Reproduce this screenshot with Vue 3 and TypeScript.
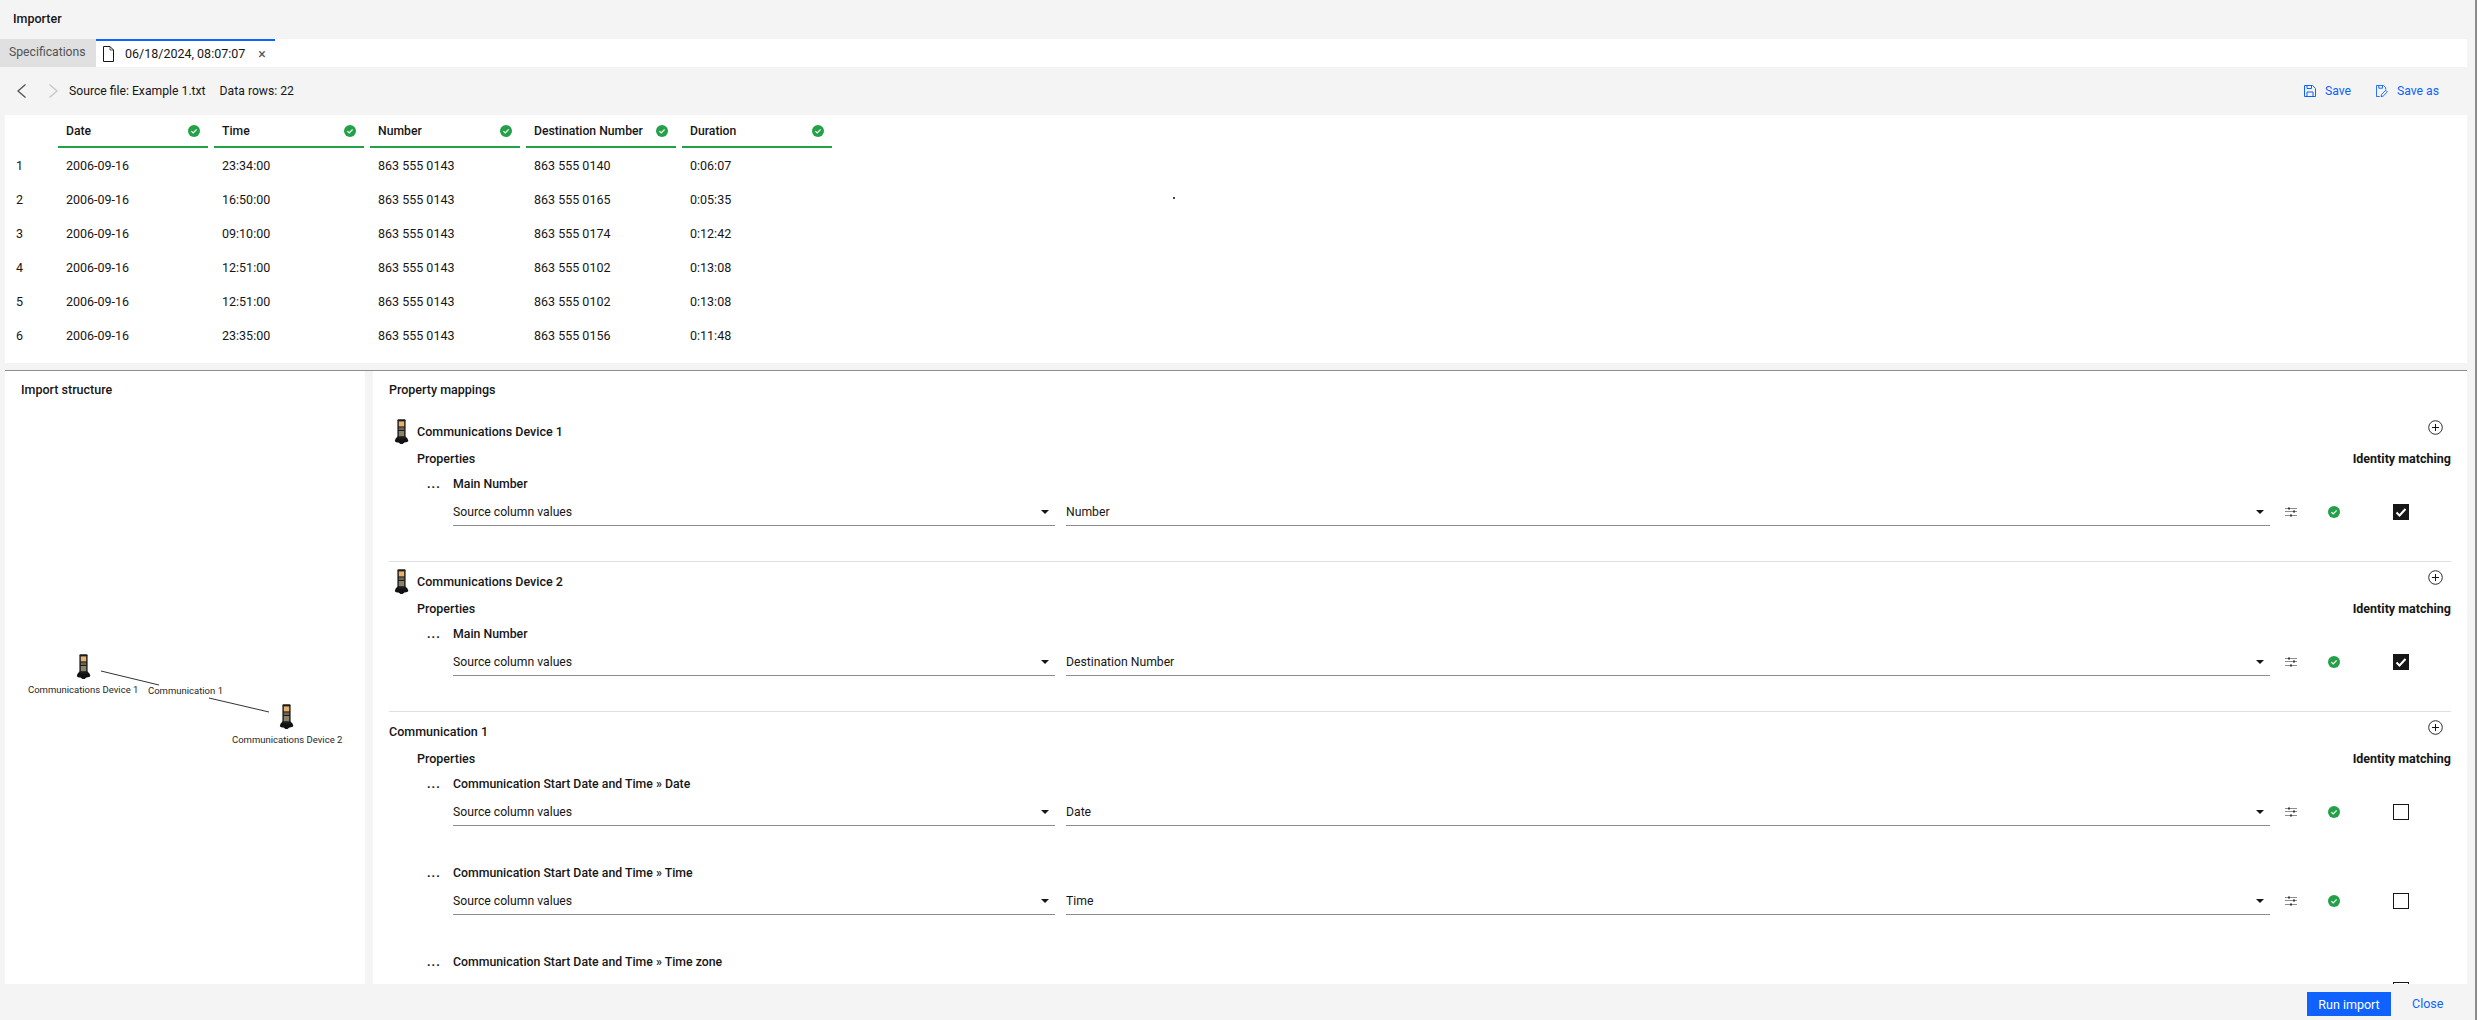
<script setup lang="ts">
const columns = ['Date', 'Time', 'Number', 'Destination Number', 'Duration']
const rows = [
  ['1', '2006-09-16', '23:34:00', '863 555 0143', '863 555 0140', '0:06:07'],
  ['2', '2006-09-16', '16:50:00', '863 555 0143', '863 555 0165', '0:05:35'],
  ['3', '2006-09-16', '09:10:00', '863 555 0143', '863 555 0174', '0:12:42'],
  ['4', '2006-09-16', '12:51:00', '863 555 0143', '863 555 0102', '0:13:08'],
  ['5', '2006-09-16', '12:51:00', '863 555 0143', '863 555 0102', '0:13:08'],
  ['6', '2006-09-16', '23:35:00', '863 555 0143', '863 555 0156', '0:11:48']
]
const sections = [
  { title: 'Communications Device 1', device: true, attrs: [{ name: 'Main Number', col: 'Number', on: true }] },
  { title: 'Communications Device 2', device: true, attrs: [{ name: 'Main Number', col: 'Destination Number', on: true }] },
  {
    title: 'Communication 1', device: false, attrs: [
      { name: 'Communication Start Date and Time » Date', col: 'Date', on: false },
      { name: 'Communication Start Date and Time » Time', col: 'Time', on: false },
      { name: 'Communication Start Date and Time » Time zone', col: '', on: false }
    ]
  }
]
</script>

<template>
  <div class="app">
    <svg width="0" height="0" class="defs">
      <defs>
        <symbol id="phone" viewBox="0 0 15 25">
          <path d="M0.8 22 Q1.2 19 3.5 17.5 L11.5 17.5 Q14 19 14.4 22 Q14 23.4 10.5 23.6 L8.5 25 L6.5 25 L4.5 23.6 Q1 23.4 0.8 22Z" fill="#111" />
          <rect x="3.4" y="0.3" width="8.2" height="19.5" rx="1" fill="#1c1c1c" />
          <rect x="4.8" y="2.4" width="5.4" height="5" fill="#e8b26c" />
          <rect x="4.8" y="8.4" width="5.4" height="2.6" fill="#6e6650" />
          <rect x="4.8" y="12" width="5.4" height="5.2" fill="#8b8268" />
        </symbol>
        <symbol id="ok" viewBox="0 0 12 12">
          <circle cx="6" cy="6" r="6" fill="#24a148" />
          <path d="M3.4 6.2 5.2 8 8.6 4.5" fill="none" stroke="#fff" stroke-width="1.1" />
        </symbol>
      </defs>
    </svg>

    <header class="title">Importer</header>

    <nav class="tabs">
      <div class="tab">Specifications</div>
      <div class="tab active">
        <svg class="file" viewBox="0 0 11 16" width="11" height="16">
          <path d="M0.5 0.5h6.5l3.5 3.5v11.5h-10z" fill="#fff" stroke="#161616" stroke-width="1" />
          <path d="M7 0.5v3.5h3.5" fill="none" stroke="#161616" stroke-width="0.7" />
        </svg>
        <span class="tab-name">06/18/2024, 08:07:07</span>
        <span class="tab-x">×</span>
      </div>
    </nav>

    <div class="toolbar">
      <svg class="chev" viewBox="0 0 9 14" width="9" height="14">
        <path d="M8.5 0.5 1 7l7.5 6.5" fill="none" stroke="#525252" stroke-width="1.3" />
      </svg>
      <svg class="chev second" viewBox="0 0 9 14" width="9" height="14">
        <path d="M0.5 0.5 8 7l-7.5 6.5" fill="none" stroke="#c6c6c6" stroke-width="1.3" />
      </svg>
      <span class="src">Source file: Example 1.txt</span>
      <span class="cnt">Data rows: 22</span>
      <div class="actions">
        <svg viewBox="0 0 12 12" width="12" height="12" class="act-icon">
          <path d="M0.5 0.5h8l3 3v8h-11zM3 0.5v3h4.5v-3M3 11.5V7h6v4.5" fill="none" stroke="#0f62fe" stroke-width="1" />
        </svg>
        <span class="act-label first">Save</span>
        <svg viewBox="0 0 13 13" width="12" height="12" class="act-icon">
          <path d="M4 12.5H0.5V0.5h7.5l2.5 2.5v2M3 0.5v3h4v-3M5.5 12.6l.5-2.4 4.5-4.5 1.8 1.8-4.5 4.5z" fill="none" stroke="#0f62fe" stroke-width="1" />
        </svg>
        <span class="act-label second">Save as</span>
      </div>
    </div>

    <section class="grid-panel">
      <div class="head-row">
        <div v-for="c in columns" :key="c" class="hcell">
          <span>{{ c }}</span>
          <svg width="12" height="12"><use href="#ok" /></svg>
        </div>
      </div>
      <div v-for="r in rows" :key="r[0]" class="data-row">
        <span class="num">{{ r[0] }}</span>
        <span v-for="(v, i) in r.slice(1)" :key="i" class="dcell">{{ v }}</span>
      </div>
      <i class="speck"></i>
    </section>

    <div class="rule"></div>

    <div class="lower">
      <aside class="structure">
        <h3 class="panel-title">Import structure</h3>
        <div class="canvas">
          <svg class="edges" width="360" height="200">
            <path d="M96 17 154 31M204 44 264 58" stroke="#333" stroke-width="1" fill="none" />
          </svg>
          <svg class="node-icon n1" width="15" height="25"><use href="#phone" /></svg>
          <span class="node-label l1">Communications Device 1</span>
          <span class="node-label l2">Communication 1</span>
          <svg class="node-icon n2" width="15" height="25"><use href="#phone" /></svg>
          <span class="node-label l3">Communications Device 2</span>
        </div>
      </aside>

      <main class="mappings">
        <h3 class="panel-title">Property mappings</h3>
        <div v-for="s in sections" :key="s.title" class="section">
          <div class="sec-head">
            <svg v-if="s.device" class="sec-icon" width="15" height="25"><use href="#phone" /></svg>
            <span class="sec-title">{{ s.title }}</span>
            <svg class="plus" viewBox="0 0 15 15" width="15" height="15">
              <circle cx="7.5" cy="7.5" r="6.8" fill="none" stroke="#161616" stroke-width="0.9" />
              <path d="M7.5 4v7M4 7.5h7" stroke="#161616" stroke-width="1" />
            </svg>
          </div>
          <div class="prop-head">
            <span>Properties</span>
            <span class="identity">Identity matching</span>
          </div>
          <div v-for="a in s.attrs" :key="a.name" class="attr">
            <div class="attr-name"><span class="dots">...</span><span>{{ a.name }}</span></div>
            <div class="attr-row">
              <div class="select first"><span>Source column values</span><i class="caret"></i></div>
              <div class="select second"><span>{{ a.col }}</span><i class="caret"></i></div>
              <svg class="tune" viewBox="0 0 12 10" width="12" height="10">
                <path d="M0 1.5h12M0 4.5h12M0 8.5h12" stroke="#8d8d8d" stroke-width="1" />
                <path d="M3 .5h2v2H3zM8 3.5h2v2H8zM5 7.5h2v2H5z" fill="#393939" />
              </svg>
              <svg class="row-ok" width="12" height="12"><use href="#ok" /></svg>
              <span class="box" :class="{ on: a.on }">
                <svg v-if="a.on" viewBox="0 0 16 16" width="16" height="16">
                  <path d="M3.5 8.5 6.5 11.5 12.5 5" fill="none" stroke="#fff" stroke-width="2" />
                </svg>
              </span>
            </div>
          </div>
        </div>
      </main>
    </div>

    <footer class="footer">
      <button class="run">Run import</button>
      <span class="close">Close</span>
    </footer>
  </div>
</template>

<style>
html, body { margin: 0; background: #f4f4f4; }
</style>

<style scoped>
.app {
  position: relative;
  width: 2477px;
  height: 1020px;
  overflow: hidden;
  background: #f4f4f4;
  border-right: 2px solid #8d8d8d;
  box-sizing: border-box;
  font-family: Roboto, "Noto Sans", sans-serif;
  font-size: 12.2px;
  color: #161616;
  display: flex;
  flex-direction: column;
}
.defs { position: absolute; }
.title {
  height: 39px;
  line-height: 37px;
  padding-left: 13px;
  font-size: 12.5px;
  font-weight: 500;
}
.tabs {
  height: 28px;
  margin-right: 8px;
  background: #fff;
  display: flex;
}
.tab {
  width: 96px;
  background: #e0e0e0;
  color: #525252;
  line-height: 26px;
  padding-left: 9px;
  box-sizing: border-box;
}
.tab.active {
  width: 179px;
  background: #fff;
  color: #161616;
  border-top: 2px solid #0f62fe;
  padding-left: 7px;
  display: flex;
  align-items: center;
  line-height: 24px;
}
.file { flex: none; margin-top: -1px; }
.tab-name { margin-left: 11px; font-size: 12.5px; }
.tab-x { margin-left: 13px; color: #525252; font-size: 14px; }
.toolbar {
  height: 48px;
  display: flex;
  align-items: center;
  margin-right: 8px;
  padding-left: 17px;
}
.chev.second { margin-left: 23px; }
.src { margin-left: 11px; }
.cnt { margin-left: 14px; }
.actions {
  margin-left: auto;
  display: flex;
  align-items: center;
  color: #0f62fe;
  padding-right: 28px;
}
.act-label { margin-left: 9px; }
.act-label.first { margin-right: 25px; }
.act-label.second { margin-left: 9px; }
.grid-panel {
  position: relative;
  height: 248px;
  margin: 0 8px 0 5px;
  background: #fff;
  padding-left: 53px;
  box-sizing: border-box;
}
.head-row { display: flex; gap: 6px; height: 33px; }
.hcell {
  width: 150px;
  box-sizing: border-box;
  border-bottom: 2px solid #24a148;
  padding: 0 8px;
  display: flex;
  align-items: center;
  justify-content: space-between;
  font-weight: 500;
}
.data-row {
  position: relative;
  display: flex;
  gap: 6px;
  height: 34px;
  align-items: center;
  font-size: 12.5px;
}
.num { position: absolute; left: -42px; }
.dcell { width: 150px; box-sizing: border-box; padding-left: 8px; }
.speck {
  position: absolute;
  left: 1168px;
  top: 82px;
  width: 2px;
  height: 2px;
  background: #444;
}
.rule {
  height: 1px;
  margin: 7px 8px 0 5px;
  background: #8d8d8d;
}
.lower {
  height: 613px;
  display: flex;
  gap: 8px;
  margin: 0 8px 0 5px;
}
.structure {
  width: 360px;
  flex: none;
  background: #fff;
  position: relative;
}
.panel-title {
  margin: 0;
  font-size: 12.5px;
  font-weight: 500;
  line-height: 38px;
}
.structure .panel-title { padding-left: 16px; }
.mappings .panel-title { padding-left: 16px; height: 45px; }
.canvas {
  position: absolute;
  left: 0;
  top: 283px;
  width: 360px;
  height: 200px;
}
.edges { position: absolute; left: 0; top: 0; }
.node-icon { position: absolute; }
.n1 { left: 71px; top: 0; }
.n2 { left: 274px; top: 50px; }
.node-label { position: absolute; font-size: 9.5px; white-space: nowrap; color: #262626; }
.l1 { left: 23px; top: 30px; }
.l2 { left: 143px; top: 31px; }
.l3 { left: 227px; top: 80px; }
.mappings {
  flex: 1;
  background: #fff;
  overflow: hidden;
  min-width: 0;
}
.section {
  height: 145px;
  position: relative;
  box-sizing: border-box;
  margin: 0 16px;
  padding-left: 28px;
}
.section + .section { border-top: 1px solid #e0e0e0; padding-top: 4px; height: 150px; }
.section:last-child { height: auto; }
.sec-head { height: 30px; display: flex; align-items: center; font-size: 12.5px; font-weight: 500; }
.sec-icon { position: absolute; left: 5px; top: 3px; }
.section + .section .sec-icon { top: 7px; }
.section:last-child .sec-title { margin-left: -28px; }
.plus { margin-left: auto; margin-right: 8px; margin-top: -8px; }
.prop-head {
  height: 24px;
  display: flex;
  align-items: center;
  justify-content: space-between;
  font-size: 12.5px;
  font-weight: 500;
}
.identity { font-weight: 700; }
.attr { height: 89px; }
.attr-name { height: 28px; display: flex; align-items: center; font-weight: 500; font-size: 12.3px; }
.dots { width: 26px; margin-left: 10px; font-weight: 700; letter-spacing: 1px; }
.attr-row { display: flex; align-items: center; height: 28px; padding-left: 36px; }
.select {
  height: 27px;
  box-sizing: border-box;
  border-bottom: 1px solid #8d8d8d;
  display: flex;
  align-items: center;
  justify-content: space-between;
  padding-right: 6px;
  flex: none;
}
.select.first { width: 602px; margin-right: 11px; }
.select.second { width: 1204px; }
.caret {
  width: 0;
  height: 0;
  border-left: 4px solid transparent;
  border-right: 4px solid transparent;
  border-top: 4px solid #161616;
}
.tune { margin-left: 15px; flex: none; }
.row-ok { margin-left: 31px; flex: none; }
.box {
  width: 16px;
  height: 16px;
  box-sizing: border-box;
  border: 1px solid #161616;
  margin-left: 53px;
  flex: none;
  position: relative;
}
.box.on { background: #161616; }
.box svg { position: absolute; left: -1px; top: -1px; }
.footer {
  height: 36px;
  display: flex;
  align-items: flex-start;
  padding-top: 8px;
  box-sizing: border-box;
  padding-left: 2307px;
}
.run {
  width: 84px;
  height: 24px;
  background: #0f62fe;
  color: #fff;
  border: 0;
  padding: 0;
  font: inherit;
  font-size: 12.5px;
}
.close {
  margin-left: 21px;
  line-height: 24px;
  color: #0f62fe;
  font-size: 12.5px;
}
</style>
